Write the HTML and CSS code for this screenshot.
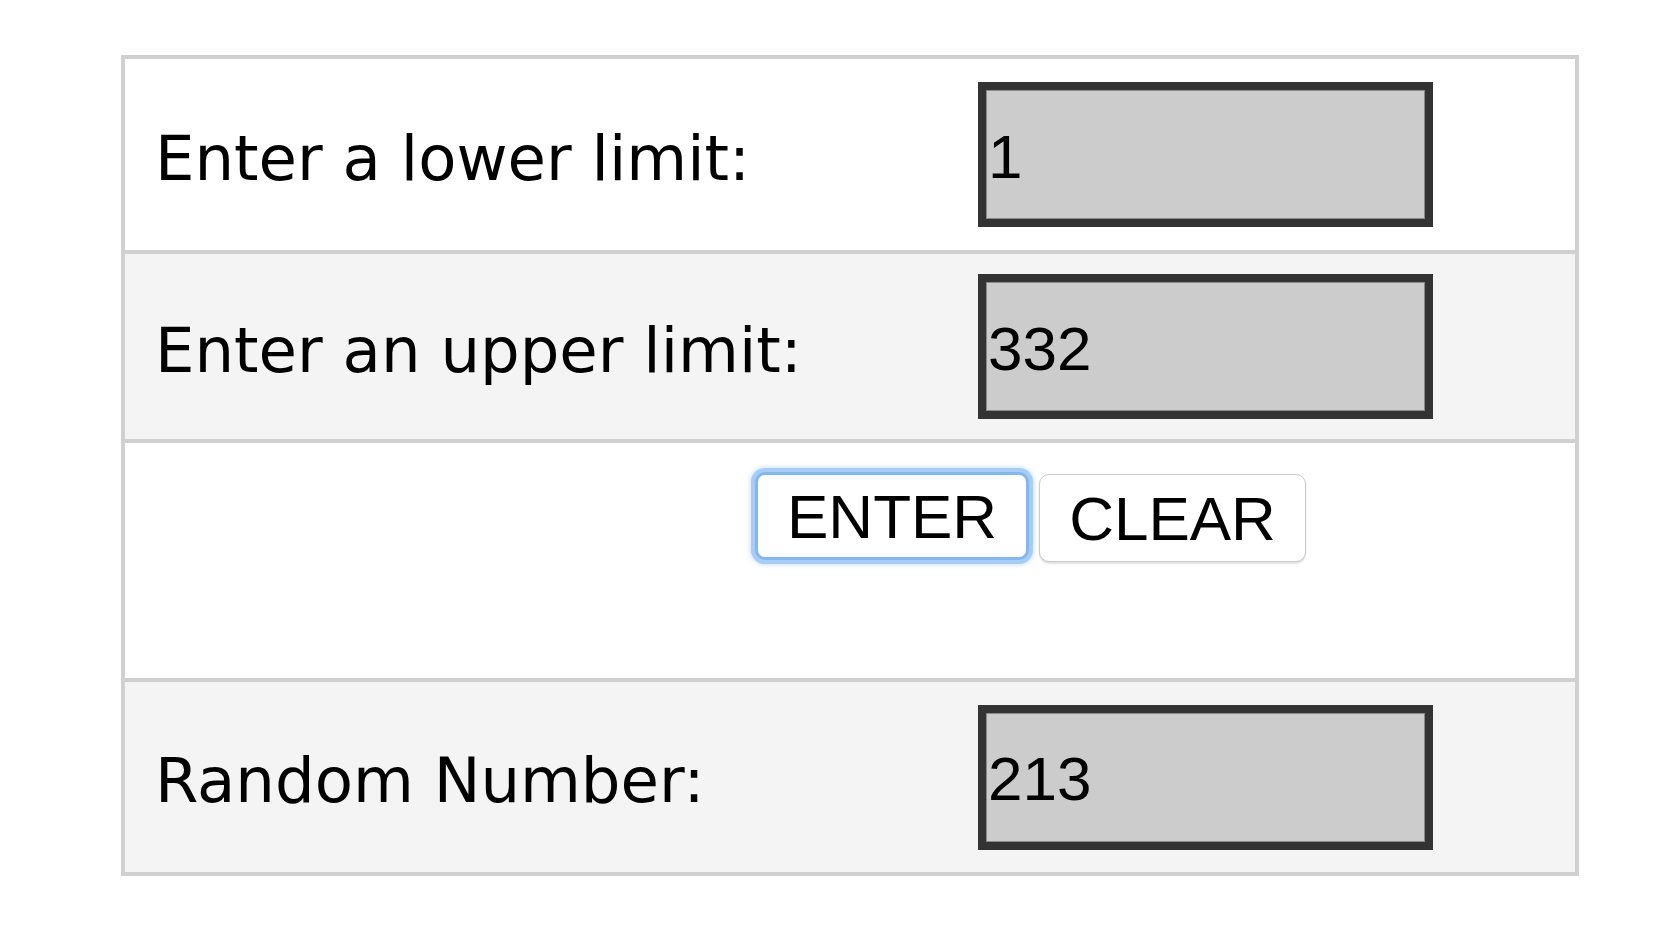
FILE: index.html
```html
<!DOCTYPE html>
<html lang="en">
<head>
    <meta charset="UTF-8">
    <meta name="viewport" content="width=device-width, initial-scale=1.0">
    <title>Random Number Generator</title>
    <link rel="stylesheet" href="styles.css">
</head>
<body>
    <form class="generator" onsubmit="return false;">
        <div class="row">
            <label class="label" for="lower">Enter a lower limit:</label>
            <div class="field"><input type="text" id="lower" value="1"></div>
        </div>

        <div class="row alt">
            <label class="label" for="upper">Enter an upper limit:</label>
            <div class="field"><input type="text" id="upper" value="332"></div>
        </div>

        <div class="row actions">
            <button type="button" id="enter" class="focused">ENTER</button>
            <button type="button" id="clear">CLEAR</button>
        </div>

        <div class="row alt last">
            <label class="label" for="result">Random Number:</label>
            <div class="field"><input type="text" id="result" value="213" readonly></div>
        </div>
    </form>
</body>
</html>
```

FILE: styles.css
```css
body {
    margin: 0;
    padding: 55px 0 0 121px;
    background-color: #FFFFFF;
    font-family: "DejaVu Sans", Verdana, sans-serif;
    color: #000000;
}

.generator {
    box-sizing: border-box;
    width: 1458px;
    border: 4px solid #D0D0D0;
}

.row {
    display: grid;
    grid-template-columns: 853px 455px;
    align-items: center;
    height: 191px;
    border-bottom: 4px solid #D0D0D0;
    background-color: #FFFFFF;
}

.row.alt {
    background-color: #F4F4F4;
    height: 185px;
}

.row.last {
    height: 190px;
    border-bottom: none;
}

.label {
    font-size: 62.5px;
    padding: 7px 0 0 30px;
}

.field input {
    box-sizing: border-box;
    width: 455px;
    height: 145px;
    margin: 0;
    padding: 3px 2px 0;
    border: 8px solid #333333;
    box-shadow: inset 0 0 0 1px #8A8A8A;
    background-color: #CCCCCC;
    font-family: "Liberation Sans", Arial, sans-serif;
    font-size: 62px;
    color: #000000;
    outline: none;
}

.row.actions {
    display: flex;
    align-items: flex-start;
    gap: 10px;
    height: 204px;
    padding: 31px 0 0 630px;
}

.actions button {
    box-sizing: border-box;
    height: 88px;
    padding: 0 29px;
    border: 1px solid #C9C9C9;
    border-radius: 10px;
    background-color: #FFFFFF;
    box-shadow: 0 2px 2px rgba(0, 0, 0, 0.12);
    font-family: "Liberation Sans", Arial, sans-serif;
    font-size: 62px;
    color: #000000;
    cursor: pointer;
}

.actions button.focused {
    border: 3px solid #86B6EC;
    box-shadow: 0 0 0 4px #A6CDF6, 0 0 4px 5px rgba(140, 190, 240, 0.45);
    margin-top: -2px;
}
```
